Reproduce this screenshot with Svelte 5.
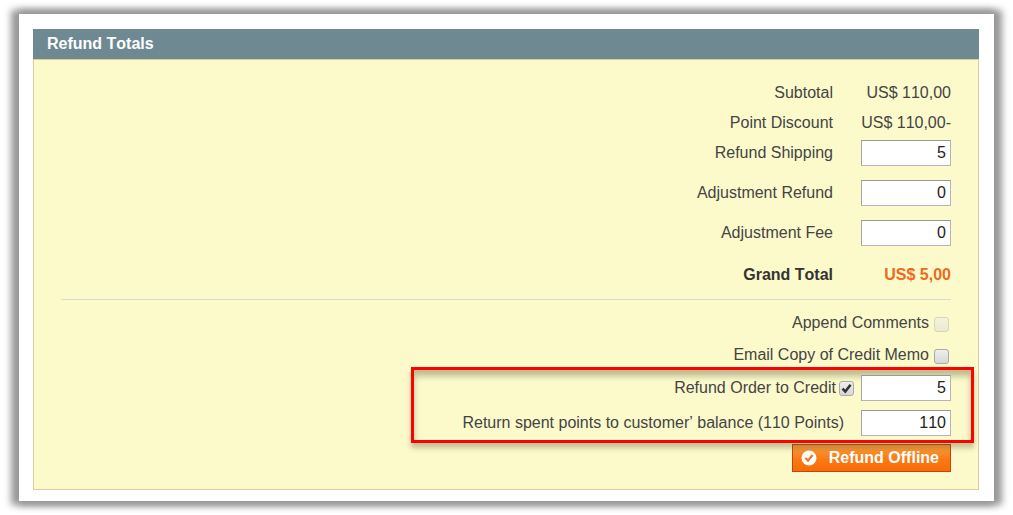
<script>
  let shipping = $state('5');
  let adjustmentRefund = $state('0');
  let adjustmentFee = $state('0');
  let append = $state(false);
  let email = $state(false);
  let toCredit = $state(true);
  let credit = $state('5');
  let points = $state('110');
</script>

<main class="page">
  <div class="sheet">
    <section class="panel">
      <h2>Refund Totals</h2>
      <div class="body">
        <table>
          <tbody>
            <tr><th scope="row">Subtotal</th><td>US$ 110,00</td></tr>
            <tr><th scope="row">Point Discount</th><td>US$ 110,00-</td></tr>
            <tr class="entry">
              <th scope="row"><label for="shipping">Refund Shipping</label></th>
              <td><input id="shipping" class="field" type="text" bind:value={shipping} /></td>
            </tr>
            <tr class="entry">
              <th scope="row"><label for="adj-refund">Adjustment Refund</label></th>
              <td><input id="adj-refund" class="field" type="text" bind:value={adjustmentRefund} /></td>
            </tr>
            <tr class="entry">
              <th scope="row"><label for="adj-fee">Adjustment Fee</label></th>
              <td><input id="adj-fee" class="field" type="text" bind:value={adjustmentFee} /></td>
            </tr>
            <tr class="grand"><th scope="row">Grand Total</th><td>US$ 5,00</td></tr>
          </tbody>
        </table>

        <div class="options">
          <div class="option">
            <label for="append">Append Comments</label>
            <input id="append" class="tick" type="checkbox" disabled bind:checked={append} />
          </div>
          <div class="option">
            <label for="email">Email Copy of Credit Memo</label>
            <input id="email" class="tick" type="checkbox" bind:checked={email} />
          </div>

          <div class="highlight">
            <div class="line">
              <label id="credit-label" for="to-credit">Refund Order to Credit</label>
              <span class="tickbox">
                <input id="to-credit" class="tick" type="checkbox" bind:checked={toCredit} />
                {#if toCredit}
                  <svg viewBox="0 0 15 15" width="15" height="15" aria-hidden="true">
                    <path d="M3.5 7.6 L6.3 10.6 L11.6 3.8" fill="none" stroke="#333" stroke-width="2.6" />
                  </svg>
                {/if}
              </span>
              <input class="field" type="text" aria-labelledby="credit-label" bind:value={credit} />
            </div>
            <div class="line points">
              <label for="points">Return spent points to customer’ balance (110 Points)</label>
              <input id="points" class="field" type="text" bind:value={points} />
            </div>
          </div>

          <button type="button">
            <svg viewBox="0 0 16 16" width="16" height="16" aria-hidden="true">
              <circle cx="8" cy="8" r="7.5" fill="#fff" />
              <path d="M4.4 8 L7 10.6 L11.5 5" fill="none" stroke="#e8772a" stroke-width="2.3" />
            </svg>
            Refund Offline
          </button>
        </div>
      </div>
    </section>
  </div>
</main>

<style>
  :global(body) {
    margin: 0;
    background: #fff;
  }

  .page {
    padding: 14px 19px;
    font: 16px/30px "Liberation Sans", Arial, sans-serif;
    font-kerning: none;
    color: #444;
  }

  .sheet {
    padding: 15px 15px 11px 14px;
    background: #fff;
    box-shadow: -4px 0 7px 4px #999, 4px 0 7px 4px #999;
  }

  h2 {
    margin: 0;
    padding: 0 14px;
    background: #6f8992;
    color: #fff;
    font-size: 16px;
    line-height: 30px;
  }

  .body {
    padding: 18px 27px 17px;
    border: 1px solid #d9cc9f;
    background: #fcfacb;
  }

  table {
    width: 100%;
    border-collapse: collapse;
  }

  th,
  td {
    height: 30px;
    padding: 0;
    text-align: right;
    vertical-align: top;
    font-weight: normal;
    white-space: nowrap;
  }

  td {
    width: 118px;
  }

  .entry th,
  .entry td {
    height: 40px;
  }

  .grand th,
  .grand td {
    padding-top: 2px;
    font-weight: bold;
  }

  .grand th {
    color: #333;
  }

  .grand td {
    color: #eb6a1c;
  }

  .field {
    box-sizing: border-box;
    width: 90px;
    height: 26px;
    margin: 0;
    padding: 0 4px;
    border: 1px solid #b5b5b5;
    border-top-color: #999;
    border-left-color: #a5a5a5;
    border-radius: 0;
    background: #fff;
    color: #222;
    font: inherit;
    line-height: 20px;
    text-align: right;
  }

  td .field {
    display: block;
    margin: 2px 0 0 auto;
  }

  .options {
    display: flex;
    flex-direction: column;
    margin-top: 9px;
    padding-top: 7px;
    border-top: 1px solid #d9d9dc;
  }

  .option {
    display: flex;
    align-items: center;
    justify-content: flex-end;
    gap: 5px;
    height: 32px;
    padding-right: 2px;
  }

  .tick {
    appearance: none;
    flex: none;
    box-sizing: border-box;
    width: 15px;
    height: 15px;
    margin: 2px 0 0;
    border: 1px solid #aaa;
    border-radius: 3px;
    background: linear-gradient(#eee, #d8d8d8);
  }

  .tick:disabled {
    opacity: 0.45;
  }

  .tickbox {
    display: grid;
    margin: 0 7px 0 3px;
  }

  .tickbox > * {
    grid-area: 1 / 1;
  }

  .tickbox svg {
    margin-top: 2px;
    pointer-events: none;
  }

  .highlight {
    position: relative;
    z-index: 1;
    align-self: flex-end;
    margin: -4px -23px 0 0;
    padding: 0 20px 0 48px;
    border: 3px solid #f00;
    box-shadow: 0 5px 5px rgba(70, 70, 30, 0.3), inset 0 6px 6px rgba(70, 70, 30, 0.35);
  }

  .line {
    display: flex;
    align-items: center;
    justify-content: flex-end;
    height: 35px;
  }

  .points {
    gap: 17px;
  }

  button {
    display: flex;
    align-items: center;
    align-self: flex-end;
    gap: 12px;
    height: 28px;
    margin: 1px 0 0;
    padding: 0 11px 0 8px;
    border: 1px solid #b84a10;
    border-radius: 0;
    background: linear-gradient(#f8a040, #f97a14 55%, #fb6a06);
    color: #fff;
    font: bold 16px/20px "Liberation Sans", Arial, sans-serif;
    font-kerning: none;
  }
</style>
